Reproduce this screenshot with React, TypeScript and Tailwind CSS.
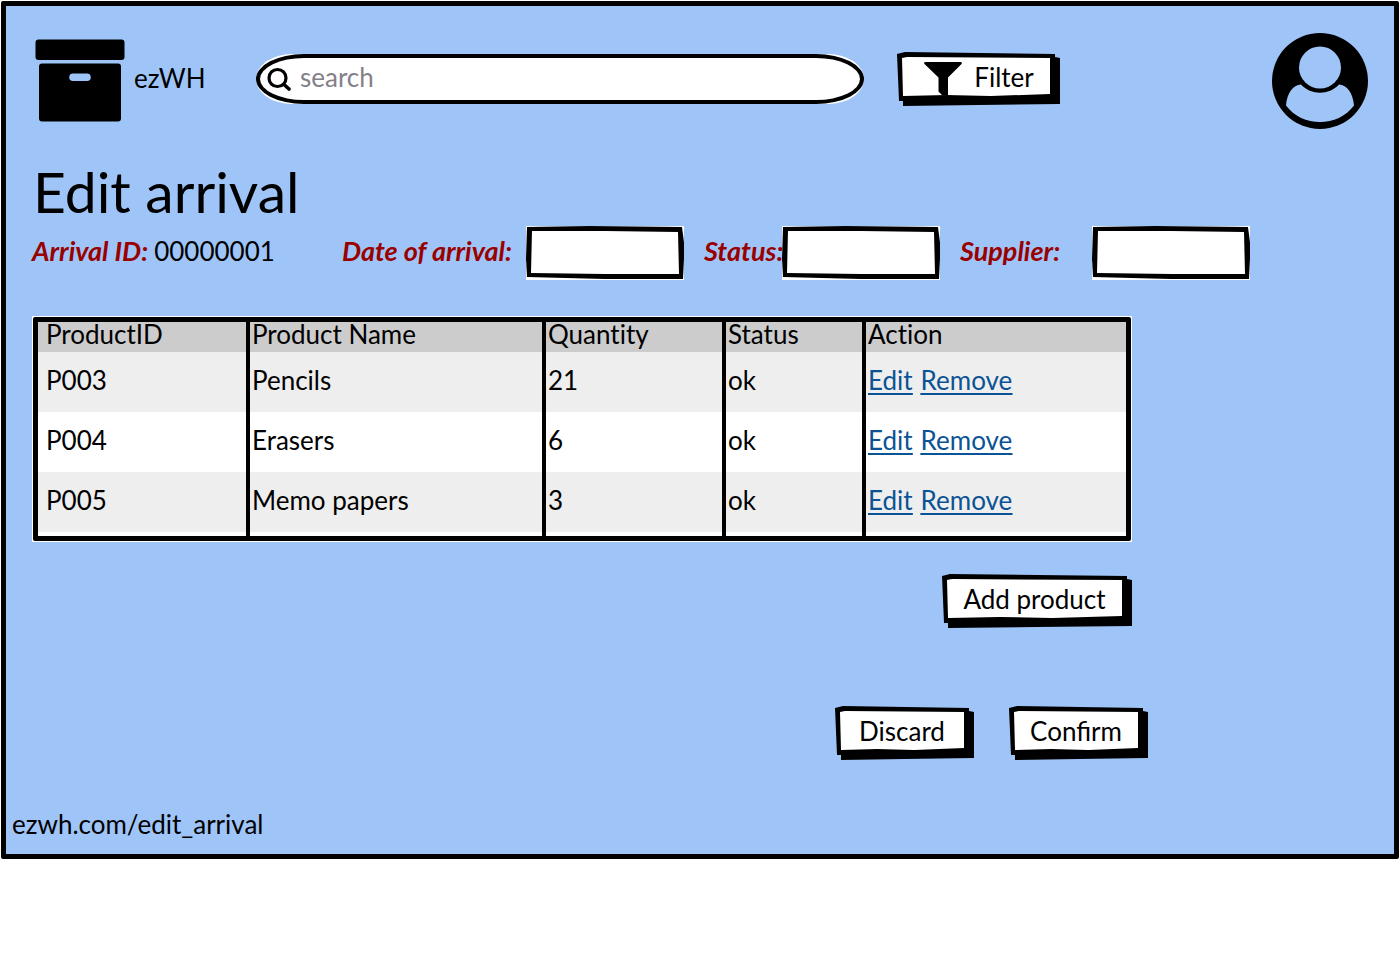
import type { ReactNode } from "react";

type Product = { id: string; name: string; quantity: number; status: string };

const products: Product[] = [
  { id: "P003", name: "Pencils", quantity: 21, status: "ok" },
  { id: "P004", name: "Erasers", quantity: 6, status: "ok" },
  { id: "P005", name: "Memo papers", quantity: 3, status: "ok" },
];

function BoxLogo() {
  return (
    <svg className="h-[84px] w-[90px] shrink-0" viewBox="0 0 90 84" aria-hidden="true">
      <rect x="0.5" y="0.5" width="89" height="20.5" rx="3" />
      <path
        fillRule="evenodd"
        d="M7 24.5H83a3 3 0 0 1 3 3V79.500a3 3 0 0 1-3 3H7a3 3 0 0 1-3-3V27.500a3 3 0 0 1 3-3ZM38 34.500a3.800 3.800 0 0 0 0 7.600H52a3.800 3.800 0 0 0 0-7.600Z"
      />
    </svg>
  );
}

function Avatar() {
  return (
    <svg className="size-24" viewBox="0 0 96 96" aria-hidden="true">
      <circle cx="48" cy="48" r="48" />
      <circle cx="48" cy="34.500" r="21" fill="#9fc5f8" />
      <path
        d="M29 51.500C39 62.500 57 62.500 67 51.500C75 52 81 60 82 72.500C66 94.500 30 94.500 14 72.500C15 60 21 52 29 51.500Z"
        fill="#9fc5f8"
      />
    </svg>
  );
}

function Funnel() {
  return (
    <svg className="h-[34px] w-[38px] shrink-0" viewBox="0 0 38 34" aria-hidden="true">
      <path d="M1 0H37Q38.500 0.500 37.500 2L24 15.500V34H19L14.500 29.500V15.500L0.500 2Q-0.500 0.500 1 0Z" />
    </svg>
  );
}

function SketchButton({ children, width }: { children: ReactNode; width: string }) {
  return (
    <button
      type="button"
      className={`flex h-[54px] shrink-0 bg-black pt-[5px] pr-[10px] pb-[10px] pl-[5px] [clip-path:polygon(0_2px,8px_0,calc(100%_-_5px)_2px,calc(100%_-_5px)_5px,100%_6px,100%_calc(100%_-_2px),50%_calc(100%_-_1px),6px_100%,6px_calc(100%_-_5px),2px_calc(100%_-_5px))] ${width}`}
    >
      <span className="flex h-full w-full items-start justify-center bg-white leading-10 [clip-path:polygon(0_1px,5px_0,100%_1px,100%_calc(100%_-_2px),60%_100%,30%_calc(100%_-_1px),1px_100%)]">
        {children}
      </span>
    </button>
  );
}

function Field({ id, label, labelWidth }: { id: string; label: string; labelWidth: string }) {
  return (
    <div className="flex shrink-0 items-center">
      <label htmlFor={id} className={`shrink-0 pb-1 text-[27px] font-bold whitespace-nowrap text-[#990000] italic ${labelWidth}`}>
        {label}
      </label>
      <span className="block bg-white">
        <span className="block h-[54px] w-[158px] bg-black p-[5px] [clip-path:polygon(1px_1px,40%_0,calc(100%_-_2px)_1px,100%_30%,100%_60%,calc(100%_-_1px)_calc(100%_-_1px),50%_calc(100%_-_1px),1px_calc(100%_-_3px),0_60%)]">
          <input
            id={id}
            className="block h-full w-full bg-white px-2 outline-none [clip-path:polygon(1px_0,50%_0,calc(100%_-_1px)_1px,100%_calc(100%_-_1px),50%_calc(100%_-_1px),0_calc(100%_-_2px))]"
          />
        </span>
      </span>
    </div>
  );
}

export default function App() {
  const cell = "border-l-4 border-black pl-[2px] first:border-l-0 first:pl-2";
  return (
    <div className="bg-white p-px font-['Lato','Noto_Sans',sans-serif] text-[26px] leading-8 text-black">
      <main className="rounded-[2px] border-[5px] border-black bg-[#9fc5f8] pb-[14px]">
        <header className="flex items-center pt-[27px] pr-[26px] pl-[29px]">
          <BoxLogo />
          <span className="w-[131px] shrink-0 pb-[6px] pl-[9px]">ezWH</span>
          <div className="mb-1 w-[608px] rounded-[36px/25px] bg-white">
            <label className="flex h-[50px] items-center rounded-[48px/25px] border-4 border-black bg-white pl-[7px]">
              <svg className="size-6 shrink-0" viewBox="0 0 24 24" fill="none" stroke="#000" strokeLinecap="round" aria-hidden="true">
                <circle cx="10.500" cy="11" r="8.500" strokeWidth="3.200" />
                <path d="M17 17.500L22 22" strokeWidth="3.600" />
              </svg>
              <input
                type="search"
                aria-label="Search"
                placeholder="search"
                className="mb-1 ml-[9px] min-w-0 flex-1 bg-transparent outline-none placeholder:text-[#84808a]"
              />
            </label>
          </div>
          <div className="mb-1 ml-[33px]">
            <SketchButton width="w-[163px]">
              <span className="flex gap-3 pl-[6px]">
                <span className="flex pt-[5px]">
                  <Funnel />
                </span>
                Filter
              </span>
            </SketchButton>
          </div>
          <button type="button" aria-label="Account" className="ml-auto shrink-0">
            <Avatar />
          </button>
        </header>

        <h1 className="mt-[30px] pl-[27px] text-[57px] leading-[64px]">Edit arrival</h1>

        <section className="mt-[3px] flex items-center pl-[26px]">
          <p className="flex w-[310px] shrink-0 gap-[6px] pb-1 whitespace-nowrap">
            <span className="text-[27px] font-bold text-[#990000] italic">Arrival ID:</span>
            <span>00000001</span>
          </p>
          <Field id="arrival-date" label="Date of arrival:" labelWidth="w-[184px]" />
          <span className="w-5 shrink-0" />
          <Field id="arrival-status" label="Status:" labelWidth="w-[78px]" />
          <span className="w-5 shrink-0" />
          <Field id="supplier" label="Supplier:" labelWidth="w-[132px]" />
        </section>

        <div className="mt-9 ml-[26px] w-[1100px] bg-white p-px">
          <div className="rounded-[2px] border-[5px] border-black">
            <table className="w-full table-fixed border-separate border-spacing-0 text-left [font-variant-ligatures:none]">
              <colgroup>
                <col className="w-[208px]" />
                <col className="w-[296px]" />
                <col className="w-[180px]" />
                <col className="w-[140px]" />
                <col />
              </colgroup>
              <thead>
                <tr className="h-[30px] bg-[#cccccc] leading-6">
                  {["ProductID", "Product Name", "Quantity", "Status", "Action"].map((title) => (
                    <th key={title} scope="col" className={`pb-[6px] font-normal ${cell}`}>
                      {title}
                    </th>
                  ))}
                </tr>
              </thead>
              <tbody className="[&_td]:pb-1 [&>tr:last-child]:h-16 [&>tr:last-child>td]:pb-2 [&>tr:last-child>td]:shadow-[inset_0_-4px_0_#fff]">
                {products.map((product) => (
                  <tr key={product.id} className="h-[60px] odd:bg-[#eeeeee] even:bg-white">
                    <td className={cell}>{product.id}</td>
                    <td className={cell}>{product.name}</td>
                    <td className={cell}>{product.quantity}</td>
                    <td className={cell}>{product.status}</td>
                    <td className={cell}>
                      <span className="flex gap-2 text-[#0b5394] underline decoration-2 underline-offset-[3px]">
                        <a href="#edit">Edit</a>
                        <a href="#remove">Remove</a>
                      </span>
                    </td>
                  </tr>
                ))}
              </tbody>
            </table>
          </div>
        </div>

        <div className="mt-8 flex w-[1126px] justify-end">
          <SketchButton width="w-[190px]">Add product</SketchButton>
        </div>
        <div className="mt-[78px] flex w-[1142px] justify-end gap-[35px]">
          <SketchButton width="w-[139px]">Discard</SketchButton>
          <SketchButton width="w-[139px]">Confirm</SketchButton>
        </div>

        <footer className="mt-12 pl-[6px]">ezwh.com/edit_arrival</footer>
      </main>
    </div>
  );
}
